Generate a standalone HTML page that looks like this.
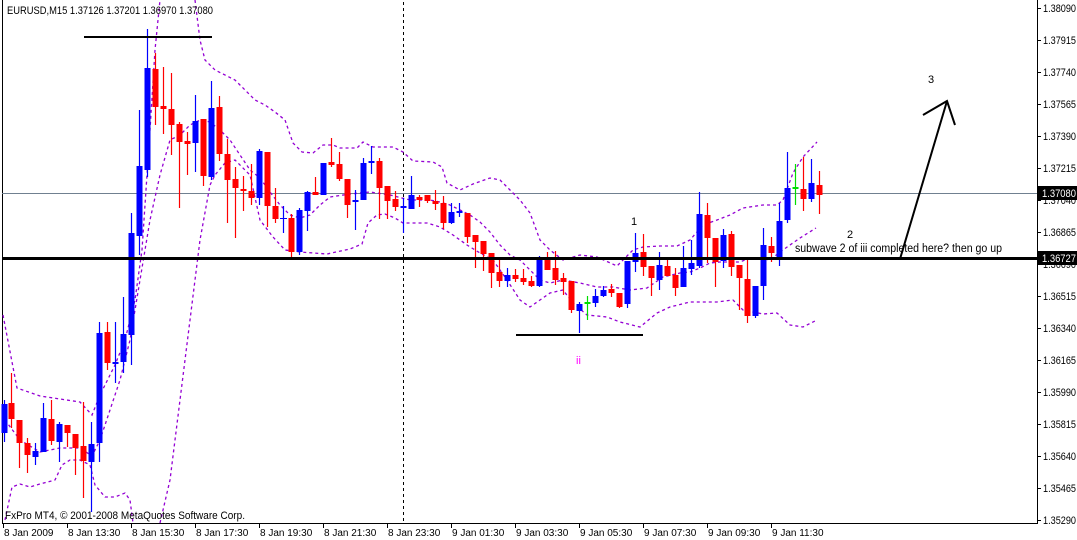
<!DOCTYPE html>
<html><head><meta charset="utf-8"><style>
html,body{margin:0;padding:0;background:#fff;}
svg{display:block;font-family:"Liberation Sans",Arial,sans-serif;}
</style></head><body>
<svg id="s" width="1077" height="540" viewBox="0 0 1077 540" xmlns="http://www.w3.org/2000/svg">
<rect width="1077" height="540" fill="#fff"/>
<line x1="2.5" y1="0" x2="2.5" y2="523" stroke="#000"/>
<line x1="1037.5" y1="0" x2="1037.5" y2="524" stroke="#000"/>
<line x1="2" y1="523.5" x2="1038" y2="523.5" stroke="#000"/>
<line x1="403.5" y1="2" x2="403.5" y2="523" stroke="#000" stroke-dasharray="3,3"/>
<line x1="2" y1="193.5" x2="1037" y2="193.5" stroke="#708090"/>
<g id="bands" fill="none" stroke="#9400d3" stroke-dasharray="3,3" stroke-width="1.3">
<polyline points="3,315 17,388 40,396 80,402 92,415 100,395 115,365 125,340 135,300 142,250 150,130 155,50 160,0"/>
<polyline points="195,0 200,40 205,60 215,70 235,80 255,100 265,105 275,112 285,120 293,143 302,152 313,153 323,145 333,145 340,148 357,148 363,142 373,147 393,147 403,152 413,161 433,162 442,167 447,183 460,190 473,184 490,178 500,180 510,190 520,200 530,213 540,240 550,250 563,260 580,255 597,257 617,266 633,250 643,247 660,246 677,246 690,240 703,225 717,220 730,215 743,208 763,205 777,205 783,200 793,173 803,157 817,142"/>
<polyline points="5,420 20,440 40,452 60,448 80,448 92,456 100,440 110,410 120,380 130,340 140,280 150,220 160,175 170,140 180,135 190,125 200,120 210,122 220,130 230,140 240,155 250,170 260,178 270,192 280,205 290,215 300,218 310,215 320,205 330,197 350,194 370,192 390,195 410,200 430,200 440,202 450,205 460,210 470,215 480,222 490,232 500,245 510,255 520,260 530,270 540,280 550,283 563,280 580,283 597,287 613,287 630,290 647,288 663,277 680,273 690,272 700,268 710,263 720,262 740,262 750,258 760,258 770,260 780,252 790,245 800,238 816,228"/>
<polyline points="5,520 12,487 20,484 30,487 40,484 55,480 62,465 70,460 80,460 90,465 95,485 105,497 115,497 125,493 130,500 133,523"/>
<polyline points="160,523 170,480 180,400 190,320 200,240 210,185 215,175 225,163 235,160 250,175 260,220 273,237 285,250 300,252 327,254 350,249 362,244 368,223 377,215 385,214 395,218 403,223 427,223 440,227 453,235 467,245 480,253 493,260 507,280 520,300 530,307 540,300 550,293 563,290 573,303 587,315 607,317 620,322 640,327 657,313 670,307 690,302 717,302 733,300 743,310 763,314 777,313 790,325 803,327 817,320"/>
</g>
<g id="candles"></g>
<line x1="2" y1="258.5" x2="1037" y2="258.5" stroke="#000" stroke-width="3"/>
<line x1="84" y1="37" x2="212" y2="37" stroke="#000" stroke-width="2"/>
<line x1="516" y1="335" x2="643" y2="335" stroke="#000" stroke-width="2"/>
<g stroke="#000" stroke-width="2" fill="none">
<line x1="900" y1="259" x2="947" y2="101"/>
<polyline points="923,115 947,101 955,125"/>
</g>
<g font-size="11" fill="#000">
<text x="7" y="14" textLength="206" lengthAdjust="spacingAndGlyphs">EURUSD,M15  1.37126 1.37201 1.36970 1.37080</text>
<text x="631" y="225">1</text>
<text x="847" y="238">2</text>
<text x="928" y="83">3</text>
<text x="576" y="364" fill="#ff00ff">ii</text>
<text x="795" y="252" font-size="11.5" textLength="207" lengthAdjust="spacingAndGlyphs">subwave 2 of iii completed here? then go up</text>
<text x="5" y="519" textLength="240" lengthAdjust="spacingAndGlyphs">FxPro MT4, © 2001-2008 MetaQuotes Software Corp.</text>
</g>
<g id="axis" font-size="11" fill="#000"></g>
<g>
<rect x="1038" y="186" width="39" height="14" fill="#000"/>
<text x="1042" y="197" font-size="11" fill="#fff" textLength="34" lengthAdjust="spacingAndGlyphs">1.37080</text>
<rect x="1038" y="251" width="39" height="14" fill="#000"/>
<text x="1042" y="262" font-size="11" fill="#fff" textLength="34" lengthAdjust="spacingAndGlyphs">1.36727</text>
</g>
</svg>
<script>
var c=[[4,400,442,404,433,'b'],[11,373,428,403,419,'r'],[19,420,468,420,443,'r'],[27,438,473,443,455,'r'],[35,443,465,451,457,'b'],[43,403,452,418,452,'b'],[51,400,445,419,441,'r'],[59,422,462,424,442,'b'],[67,425,447,425,433,'r'],[75,434,475,434,448,'r'],[83,402,498,446,461,'r'],[91,422,512,444,462,'b'],[99,322,462,333,443,'b'],[107,322,370,332,363,'r'],[115,322,383,362,364,'b'],[123,297,373,334,362,'b'],[131,213,365,233,335,'b'],[139,110,255,166,236,'b'],[147,29,177,68,170,'b'],[155,53,125,69,107,'r'],[163,67,134,106,109,'r'],[171,73,155,109,125,'r'],[179,122,208,124,142,'r'],[187,132,175,141,144,'r'],[195,95,172,121,143,'b'],[203,119,186,119,176,'r'],[211,81,180,108,177,'b'],[219,96,161,107,154,'r'],[227,139,223,154,180,'r'],[235,167,238,179,188,'r'],[243,176,211,189,191,'r'],[251,164,205,191,198,'r'],[259,149,205,151,198,'b'],[267,152,227,152,206,'r'],[275,188,223,206,219,'r'],[283,206,233,218,219,'b'],[291,214,257,218,252,'r'],[299,208,255,210,252,'b'],[307,191,231,192,211,'b'],[315,177,195,192,195,'r'],[323,163,195,163,195,'b'],[331,138,167,162,165,'r'],[339,152,181,164,179,'r'],[347,179,218,179,205,'r'],[355,190,230,200,202,'b'],[363,158,200,163,200,'b'],[371,146,174,161,163,'b'],[379,158,219,161,188,'r'],[387,186,219,186,201,'r'],[395,191,211,199,207,'r'],[403,198,233,206,208,'b'],[411,176,209,195,209,'b'],[419,195,207,197,200,'r'],[427,195,203,195,201,'r'],[435,190,210,201,204,'r'],[443,196,229,203,223,'r'],[451,203,224,212,223,'b'],[459,203,217,211,213,'b'],[467,213,243,213,237,'r'],[475,235,268,235,242,'r'],[483,241,271,241,254,'r'],[491,253,288,253,273,'r'],[499,260,287,272,281,'r'],[507,268,287,275,281,'b'],[515,269,282,275,279,'r'],[523,269,285,278,282,'r'],[531,276,287,281,286,'r'],[539,256,287,258,286,'b'],[547,252,270,259,270,'r'],[555,251,285,268,280,'r'],[563,273,295,278,282,'r'],[571,281,313,281,310,'r'],[579,302,333,304,311,'b'],[587,296,320,302,304,'g'],[595,289,307,296,303,'b'],[603,286,297,290,296,'b'],[611,284,297,289,293,'r'],[619,293,308,293,307,'r'],[627,261,308,261,304,'b'],[635,233,272,253,262,'b'],[643,234,276,252,267,'r'],[651,266,296,266,278,'r'],[659,252,290,265,280,'b'],[667,258,276,266,276,'r'],[675,268,296,275,288,'r'],[683,246,287,268,287,'b'],[691,240,275,263,269,'b'],[699,192,268,214,266,'b'],[707,203,263,215,238,'r'],[715,238,287,238,262,'r'],[723,229,268,235,261,'b'],[731,231,276,234,267,'r'],[739,265,310,265,278,'r'],[747,260,323,279,316,'r'],[755,286,318,286,316,'b'],[763,228,300,245,286,'b'],[771,237,262,246,253,'r'],[779,203,266,221,257,'b'],[787,152,223,188,220,'b'],[795,164,205,187,189,'g'],[803,157,211,189,199,'r'],[811,159,202,183,199,'b'],[819,171,214,185,195,'r']];
var col={b:'#0000ff',r:'#ff0000',g:'#00dd00'},h='';
c.forEach(function(d){var x=d[0],k=col[d[5]],t=Math.min(d[3],d[4]),bt=Math.max(d[3],d[4]);
h+='<line x1="'+(x+0.5)+'" y1="'+d[1]+'" x2="'+(x+0.5)+'" y2="'+d[2]+'" stroke="'+k+'" stroke-width="1.2"/>';
if(bt-t<2)h+='<line x1="'+(x-3)+'" y1="'+(t+0.5)+'" x2="'+(x+4)+'" y2="'+(t+0.5)+'" stroke="'+k+'"/>';
else h+='<rect x="'+(x-2.5)+'" y="'+t+'" width="6" height="'+(bt-t)+'" fill="'+k+'"/>';});
document.getElementById('candles').innerHTML=h;
var a='',p=1.38090;
for(var i=0;i<17;i++){var y=8+i*32;var v=(p-i*0.00175).toFixed(5);
a+='<line x1="1037" y1="'+(y+0.5)+'" x2="1041" y2="'+(y+0.5)+'" stroke="#000"/><text x="1043" y="'+(y+4)+'" textLength="33" lengthAdjust="spacingAndGlyphs">'+v+'</text>';}
var L=['8 Jan 2009','8 Jan 13:30','8 Jan 15:30','8 Jan 17:30','8 Jan 19:30','8 Jan 21:30','8 Jan 23:30','9 Jan 01:30','9 Jan 03:30','9 Jan 05:30','9 Jan 07:30','9 Jan 09:30','9 Jan 11:30'];
L.forEach(function(s,i){var x=3+i*64;a+='<line x1="'+(x+0.5)+'" y1="523" x2="'+(x+0.5)+'" y2="528" stroke="#000"/><text x="'+(x+1)+'" y="536" font-size="10">'+s+'</text>';});
document.getElementById('axis').innerHTML=a;
</script>
</body></html>
